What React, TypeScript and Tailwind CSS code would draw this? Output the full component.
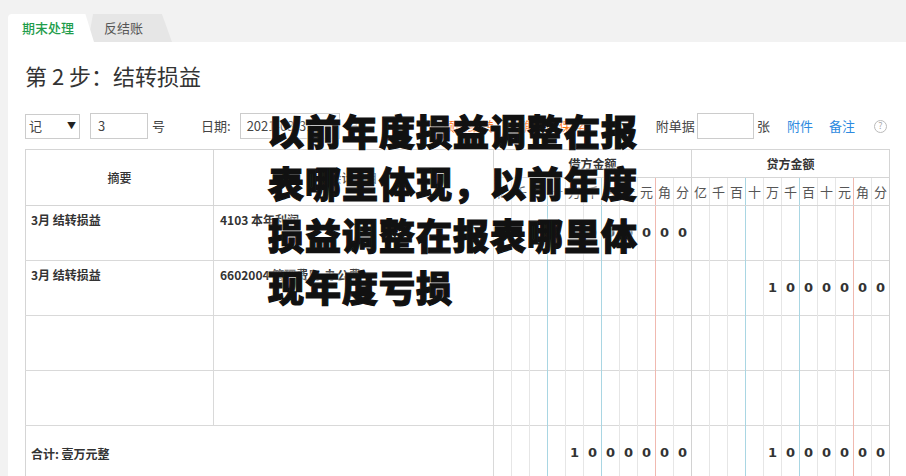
const DIGITS = ["亿", "千", "百", "十", "万", "千", "百", "十", "元", "角", "分"];

const lineColor = (i: number) => {
  if (i === 2 || i === 5) return "border-r-[#a9d6e3]";
  if (i === 8) return "border-r-[#f0b9b0]";
  if (i === 10) return "border-r-[#d2d2d2]";
  return "border-r-[#e6e6e6]";
};

const rows = [
  { summary: "3月 结转损益", account: "4103 本年利润", debit: "1000000", credit: "" },
  { summary: "3月 结转损益", account: "6602004 管理费用-办公费", debit: "", credit: "1000000" },
  { summary: "", account: "", debit: "", credit: "" },
  { summary: "", account: "", debit: "", credit: "" },
];

const DigitCells: React.FC<{ value: string }> = ({ value }) => {
  const padded = value.padStart(11, " ").split("");
  return (
    <>
      {padded.map((d, i) => (
        <td
          key={i}
          className={`border-r ${lineColor(i)} text-center align-middle text-[13px] font-bold text-[#333] font-['DejaVu_Sans',sans-serif]`}
        >
          {d.trim()}
        </td>
      ))}
    </>
  );
};

export default function App() {
  return (
    <div className="relative w-[906px] h-[476px] overflow-hidden bg-[#f2f2f2] text-[#333] font-['Noto_Sans_CJK_SC','Noto_Sans',sans-serif]">
      {/* ===== TABS ===== */}
      <div className="flex h-[42px] items-end pl-[8px]">
        <div className="relative z-10 flex h-[28px] w-[86px] items-center rounded-tl-[4px] bg-white pl-[14px] text-[13px] font-medium text-[#1f9d4c] [clip-path:polygon(0_0,90%_0,100%_100%,0_100%)]">
          期末处理
        </div>
        <div className="-ml-[6px] flex h-[28px] w-[84px] items-center bg-[#e6e6e6] pl-[16px] text-[13px] text-[#555] [clip-path:polygon(6%_0,88%_0,100%_100%,0_100%)]">
          反结账
        </div>
      </div>

      {/* ===== CONTENT ===== */}
      <div className="ml-[8px] h-[434px] bg-white pl-[17px]">
        <h2 className="pt-[19px] text-[22px] leading-[28px] text-[#333]">第 2 步：结转损益</h2>

        {/* toolbar */}
        <div className="mt-[24px] flex h-[26px] items-center text-[13px] text-[#444]">
          <div className="flex h-[25px] w-[55px] items-center justify-between border border-[#ccc] px-[3px]">
            <span>记</span>
            <span className="text-[9px] text-[#222]">▼</span>
          </div>
          <div className="ml-[10px] flex h-[26px] w-[58px] items-center border border-[#ccc] pl-[7px]">3</div>
          <span className="ml-[4px]">号</span>
          <span className="ml-[36px]">日期:</span>
          <div className="ml-[9px] flex h-[26px] w-[100px] items-center border border-[#ccc] pl-[6px]">2021-03-31</div>
          <span className="ml-[6px] text-[#aaa]">自</span>
          <span className="ml-[70px] text-[#f60]">余额已结转，请确认后保存!</span>
          <span className="ml-[67px]">附单据</span>
          <div className="ml-[2px] h-[26px] w-[57px] border border-[#ccc]" />
          <span className="ml-[3px]">张</span>
          <span className="ml-[17px] text-[#2d8ae0]">附件</span>
          <span className="ml-[16px] text-[#2d8ae0]">备注</span>
          <span className="ml-[19px] flex h-[13px] w-[13px] items-center justify-center rounded-full border border-[#bbb] text-[9px] text-[#aaa]">?</span>
        </div>

        {/* table */}
        <table className="mt-[10px] w-[864px] table-fixed border-collapse border border-[#d5d5d5] text-[12px]">
          <colgroup>
            <col className="w-[188px]" />
            <col className="w-[280px]" />
            {Array.from({ length: 22 }).map((_, i) => (
              <col key={i} className="w-[18px]" />
            ))}
          </colgroup>
          <thead>
            <tr className="h-[28px]">
              <th rowSpan={2} className="border-r border-b border-[#d5d5d5] font-medium text-[#333]">摘要</th>
              <th rowSpan={2} className="border-r border-b border-[#d5d5d5] font-medium text-[#333]">会计科目</th>
              <th colSpan={11} className="border-r border-b border-[#d5d5d5] font-bold text-[#333]">借方金额</th>
              <th colSpan={11} className="border-b border-[#d5d5d5] font-bold text-[#333]">贷方金额</th>
            </tr>
            <tr className="h-[28px]">
              {[...DIGITS, ...DIGITS].map((d, i) => (
                <th
                  key={i}
                  className={`border-b border-b-[#d5d5d5] border-r ${lineColor(i % 11)} text-[13px] font-normal text-[#555]`}
                >
                  {d}
                </th>
              ))}
            </tr>
          </thead>
          <tbody>
            {rows.map((r, idx) => (
              <tr key={idx} className="h-[55px] border-b border-[#d9d9d9]">
                <td className="border-r border-[#d9d9d9] px-[5px] pt-[5px] align-top font-bold text-[#333]">{r.summary}</td>
                <td className="border-r border-[#d9d9d9] px-[6px] pt-[5px] align-top font-bold text-[#333]">{r.account}</td>
                <DigitCells value={r.debit} />
                <DigitCells value={r.credit} />
              </tr>
            ))}
            <tr className="h-[55px]">
              <td colSpan={2} className="border-r border-[#d9d9d9] px-[5px] pt-[2px] align-middle font-bold text-[#333]">合计: 壹万元整</td>
              <DigitCells value="1000000" />
              <DigitCells value="1000000" />
            </tr>
          </tbody>
        </table>
      </div>

      {/* ===== TITLE OVERLAY ===== */}
      <div className="absolute left-[268px] top-[104px] w-[376px] text-[36px] font-black leading-[52px] tracking-[1px] text-[#111] [-webkit-text-stroke:1.2px_#111] [text-shadow:0_0_2px_#fff,0_0_3px_#fff,0_0_4px_#fff]">
        以前年度损益调整在报表哪里体现，以前年度损益调整在报表哪里体现年度亏损
      </div>
    </div>
  );
}
